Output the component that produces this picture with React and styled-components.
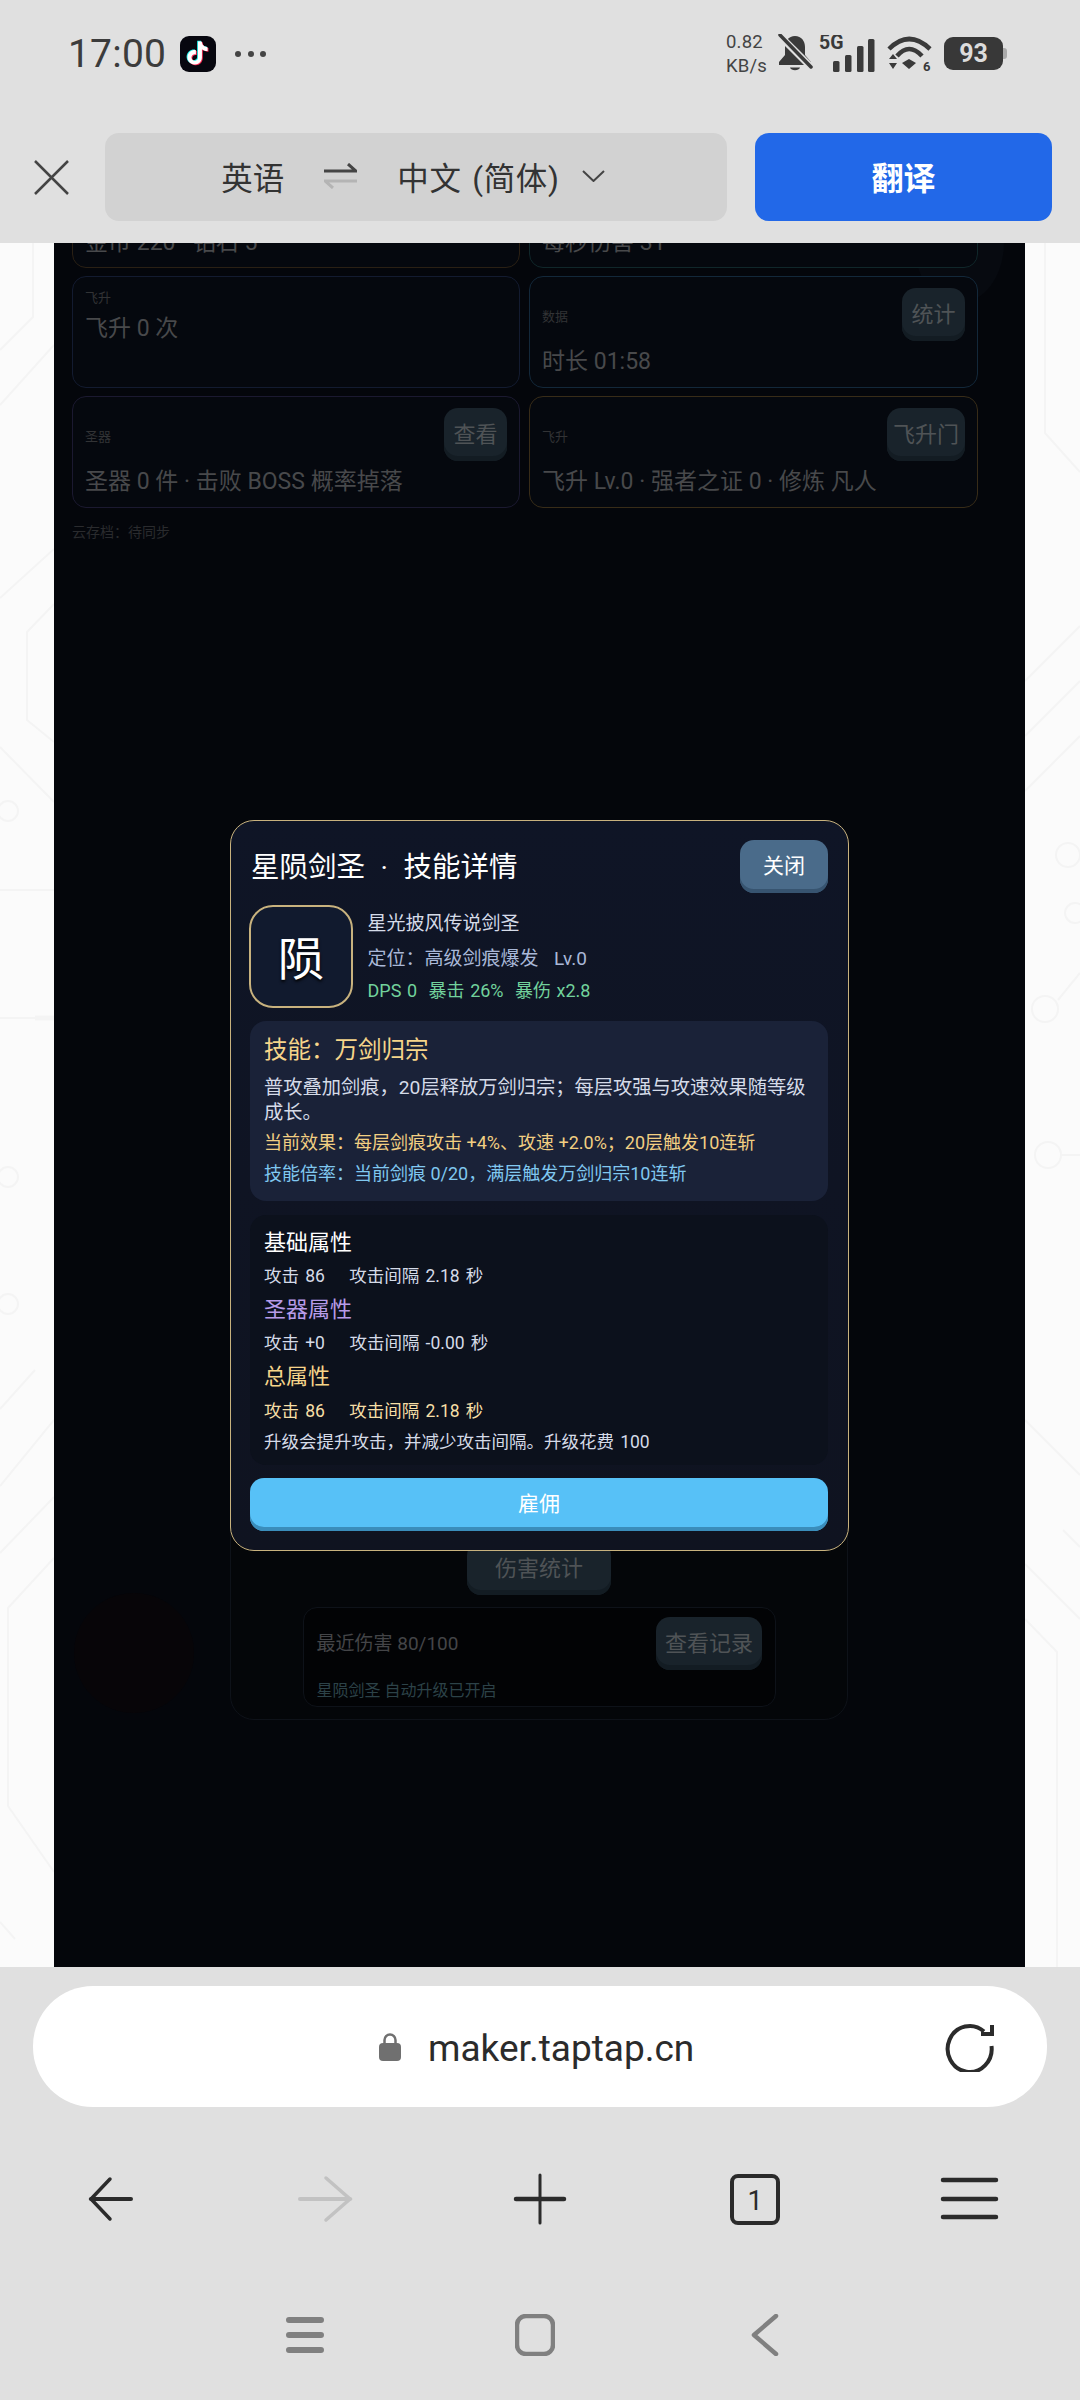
import React from "react";
import styled, { createGlobalStyle } from "styled-components";

const Global = createGlobalStyle`
  html, body { margin: 0; padding: 0; background: #e0e0e0; }
  * { box-sizing: border-box; }
  body { font-family: Roboto, "Noto Sans CJK SC", sans-serif; }
`;

const Screen = styled.div`
  width: 1080px; height: 2400px; display: flex; flex-direction: column;
  overflow: hidden; background: #e0e0e0;
`;
const TopChrome = styled.header`
  flex: none; height: 243px; background: #e0e0e0; display: flex; flex-direction: column;
`;
const StatusBar = styled.div`
  height: 107px; display: flex; align-items: center; justify-content: space-between;
  padding: 0 77px 0 68px; color: #3c3c3c;
`;
const StatusGroup = styled.div`
  display: flex; align-items: center; gap: ${p => p.$gap || 0}px;
`;
const Clock = styled.span`
  font-size: 39px; line-height: 40px; letter-spacing: 0.2px; width: 112px;
`;
const AppBadge = styled.span`
  width: 36px; height: 36px; border-radius: 9px; background: #07070f;
  display: flex; align-items: center; justify-content: center;
`;
const MoreDots = styled.span`
  display: flex; gap: 6.5px; margin-left: 19px;
  i { width: 6px; height: 6px; border-radius: 50%; background: #444; display: block; }
`;
const NetSpeed = styled.span`
  display: flex; flex-direction: column; font-size: 18.5px; line-height: 24px; width: 40px;
  letter-spacing: 0.2px; color: #444;
`;
const SignalSlot = styled.span`
  display: flex; margin-left: -6px;
`;
const Battery = styled.span`
  width: 59px; height: 33px; border-radius: 9px; background: #383838; color: #dcdcdc;
  font-size: 25px; font-weight: 700; display: flex; align-items: center; justify-content: center;
  position: relative;
  &::after {
    content: ""; position: absolute; left: 59px; top: 11px; width: 4px; height: 11px;
    border-radius: 0 3px 3px 0; background: #aaa;
  }
`;
const TranslateRow = styled.div`
  display: flex; align-items: center; padding: 26px 28px 0 34px;
`;
const CloseGlyph = styled.svg`
  width: 35px; height: 35px; margin-right: 36px; flex: none;
`;
const LangPill = styled.div`
  width: 622px; height: 88px; border-radius: 14px; background: #d2d2d2; color: #333;
  display: flex; align-items: center; justify-content: center; padding: 0 6px 2px 0;
  font-size: 31.5px; margin-right: 28px; font-weight: 400;
`;
const TargetLang = styled.span`
  letter-spacing: 0.7px; word-spacing: 2px; white-space: nowrap;
`;
const SwapIcon = styled.svg`
  width: 33px; height: 26px; margin: 0 40px;
`;
const Chevron = styled.svg`
  width: 23px; height: 12px; margin-left: 22px;
`;
const TranslateButton = styled.div`
  width: 297px; height: 88px; border-radius: 14px; background: #2268e8; color: #fff;
  font-size: 32px; font-weight: 700; display: flex; align-items: center; justify-content: center;
  padding-bottom: 2px;
`;

const Main = styled.main`
  flex: 1; min-height: 0; display: grid; grid-template-columns: 54px 971px 55px; background: #fbfbfb;
  overflow: hidden;
`;
const Gutter = styled.svg`
  display: block; width: 100%; height: 100%;
  fill: none; stroke: #f4f4f4; stroke-width: 2;
`;
const Panel = styled.div`
  position: relative; background: #04060b; overflow: hidden; padding: 0 18px;
`;
const GlowBlob = styled.div`
  position: absolute; left: 20px; top: 1350px; width: 120px; height: 120px; border-radius: 50%;
  background: #070508;
`;
const CornerGlow = styled.div`
  position: absolute; left: 860px; top: -60px; width: 90px; height: 120px; border-radius: 50%;
  background: #070a10;
`;
const CardGrid = styled.div`
  position: relative; margin-top: -87px; width: 906px; display: grid;
  grid-template-columns: 448px 449px; gap: 8px 9px; grid-auto-rows: 112px;
`;
const Card = styled.div`
  border: 1px solid ${p => p.$edge}; border-radius: 14px; padding: 11px 12px 0 12px;
  display: grid; grid-template-columns: 1fr auto; position: relative; background: #05080e;
  align-content: start;
`;
const CardLabel = styled.div`
  font-size: 13px; line-height: 20px; color: #323335; grid-column: 1; align-self: ${p => p.$mid ? "center" : "start"};
  margin-top: ${p => p.$mid ? 4 : 0}px;
`;
const CardText = styled.div`
  font-size: 23px; line-height: 30px; color: #48494b; grid-column: 1 / 3; margin-top: ${p => p.$top || 0}px;
  white-space: nowrap;
`;
const DimButton = styled.div`
  height: 53px; padding: 0 ${p => p.$pad ?? 9.5}px 5px; border-radius: 14px; background: #19232b;
  box-shadow: inset 0 -5px 0 #131c23; color: #4f5356; font-size: ${p => p.$size || 22}px;
  display: flex; align-items: center; justify-content: center; white-space: nowrap;
`;
const SyncNote = styled.div`
  position: relative; font-size: 14px; line-height: 20px; color: #2a2b2e; margin-top: 14px;
`;
const DamageCard = styled.section`
  position: relative; margin: 855px 0 0 158px; width: 618px; height: 323px;
  border: 1px solid #0e1219; border-radius: 24px; background: #040609;
  display: flex; flex-direction: column; align-items: center; justify-content: flex-end;
  padding-bottom: 12px; gap: 12px;
`;
const RecordCard = styled.div`
  width: 473px; height: 100px; border: 1px solid #0e1219; border-radius: 14px; background: #020305;
  display: grid; grid-template-columns: 1fr auto; padding: 9px 13px 0 13px;
`;
const RecordText = styled.div`
  font-size: 19px; line-height: 24px; color: #444548; margin-top: 15px;
`;
const RecordNote = styled.div`
  grid-column: 1 / 3; font-size: 16px; line-height: 24px; color: #2c4248; margin-top: 6px;
`;

const Overlay = styled.div`
  position: absolute; inset: 0; display: flex; justify-content: center; align-items: flex-start;
  padding-top: 577px;
`;
const Modal = styled.div`
  width: 619px; height: 731px; border: 1.5px solid #c8b27e; border-radius: 24px;
  background: linear-gradient(180deg, #0f1526 0%, #0f1320 100%); padding: 19px 20px 0 19px;
  display: flex; flex-direction: column;
`;
const ModalHead = styled.div`
  display: flex; align-items: flex-start; justify-content: space-between; height: 53px;
`;
const ModalTitle = styled.h2`
  margin: 0; font-weight: 400; font-size: 28.5px; line-height: 55px; color: #fff; padding-left: 1px;
  white-space: pre; word-spacing: 8.5px;
`;
const RaisedButton = styled.button`
  border: 0; font-family: inherit; color: #fff; font-size: 21px;
  background: ${p => p.$bg}; box-shadow: inset 0 -4px 0 ${p => p.$edge};
  height: 53px; width: ${p => p.$wide ? "100%" : "88px"}; border-radius: 14px; padding: 0 0 6px;
  margin-top: ${p => p.$top || 0}px; display: block; flex: none;
`;
const HeroRow = styled.div`
  display: flex; gap: 14.5px; margin: 12px 0 0 -1px;
`;
const Avatar = styled.div`
  width: 104px; height: 103px; border: 2.5px solid #c8b27e; border-radius: 24px; background: #111a2e;
  color: #fff; font-size: 46px; display: flex; align-items: center; justify-content: center;
  text-shadow: 0 2px 3px #000; flex: none; padding-bottom: 4px;
`;
const HeroInfo = styled.div`
  display: flex; flex-direction: column; padding-top: 1px;
`;
const HeroLine = styled.div`
  font-size: ${p => p.$size}px; line-height: ${p => p.$lh}px; color: ${p => p.$color}; white-space: pre;
  word-spacing: ${p => p.$spread || 0}px;
`;
const SkillBox = styled.div`
  margin-top: 13px; height: 180px; background: #1a2238; border-radius: 16px; padding: 11px 14px 0;
`;
const SkillTitle = styled.div`
  font-size: 23.5px; line-height: 36px; color: #f6d58a;
`;
const SkillDesc = styled.div`
  font-size: 19.25px; line-height: 25px; color: #d5dbe8; margin-top: 7px;
`;
const SkillLine = styled.div`
  font-size: 18px; line-height: 26px; margin-top: 5px; color: ${p => p.$color}; white-space: nowrap;
`;
const AttrBox = styled.div`
  margin-top: 14px; height: 250px; background: #0c111c; border-radius: 16px; padding: 12px 14px 0;
`;
const AttrHead = styled.div`
  font-size: 22px; line-height: 32px; color: ${p => p.$color}; margin-top: ${p => p.$top || 0}px;
`;
const AttrLine = styled.div`
  font-size: 17.5px; line-height: 26px; color: ${p => p.$color || "#d5dbe8"}; margin-top: ${p => p.$top || 4}px;
  white-space: pre; word-spacing: 1.8px;
`;

const BottomChrome = styled.footer`
  flex: none; height: 433px; background: #e0e0e0; padding-top: 19px;
`;
const UrlPill = styled.div`
  margin: 0 33px; height: 121px; border-radius: 60px; background: #fff;
  display: grid; grid-template-columns: 346px 1fr 102px; align-items: center;
`;
const UrlHost = styled.div`
  grid-column: 2; display: flex; align-items: center; gap: 27px; color: #2b2b2b; font-size: 37px;
  font-family: Roboto, sans-serif;
`;
const UrlText = styled.span`
  padding-top: 3px;
`;
const NavRow = styled.nav`
  height: 100px; margin-top: 42px; display: grid; grid-template-columns: repeat(5, 215px);
  padding-left: 2.5px; justify-items: center; align-items: center;
`;
const SysRow = styled.div`
  height: 100px; margin-top: 36px; display: grid; grid-template-columns: repeat(3, 230px);
  padding-left: 190px; justify-items: center; align-items: center;
`;

const TIKTOK = "M12.525.02c1.31-.02 2.61-.01 3.91-.02.08 1.53.63 3.09 1.75 4.17 1.12 1.11 2.7 1.62 4.24 1.79v4.03c-1.44-.05-2.89-.35-4.2-.97-.57-.26-1.1-.59-1.62-.93-.01 2.92.01 5.84-.02 8.75-.08 1.4-.54 2.79-1.35 3.94-1.31 1.92-3.58 3.17-5.91 3.21-1.43.08-2.86-.31-4.08-1.03-2.02-1.19-3.44-3.37-3.65-5.71-.02-.5-.03-1-.01-1.49.18-1.9 1.12-3.72 2.58-4.96 1.66-1.44 3.98-2.13 6.15-1.72.02 1.48-.04 2.96-.04 4.44-.99-.32-2.15-.23-3.02.37-.63.41-1.11 1.04-1.36 1.75-.21.51-.15 1.07-.14 1.61.24 1.64 1.82 3.02 3.5 2.87 1.12-.01 2.19-.66 2.77-1.61.19-.33.4-.67.41-1.06.1-1.79.06-3.57.07-5.36.01-4.03-.01-8.05.02-12.07z";

const TikTokIcon = () => (
  <svg width="26" height="27" viewBox="-1 -1 27 27">
    <path d={TIKTOK} fill="#25f4ee" transform="translate(-.9 -.7)" />
    <path d={TIKTOK} fill="#fe2c55" transform="translate(.9 .7)" />
    <path d={TIKTOK} fill="#fff" />
  </svg>
);
const BellOffIcon = () => (
  <svg width="35" height="39" viewBox="0 0 35 39">
    <path d="M17 2c-6.5 0-10 5-10 11v8l-6 7v3h32v-3l-6-7v-8C27 7 23.500 2 17 2z" fill="#3a3a3a" />
    <path d="M12 33.500h10c-1 3.500-9 3.500-10 0z" fill="#3a3a3a" />
    <path d="M1 1l33 33" stroke="#e0e0e0" strokeWidth="7" />
    <path d="M2 1l31 32" stroke="#3a3a3a" strokeWidth="3.500" strokeLinecap="round" />
  </svg>
);
const SignalIcon = () => (
  <svg width="56" height="38" viewBox="0 0 56 38">
    <text x="0" y="14" fontSize="19.5" fontWeight="700" fontFamily="Roboto, sans-serif" fill="#3a3a3a">5G</text>
    {[[14, 26], [26, 20], [38, 11], [49, 4]].map(([x, y]) => (
      <rect key={x} x={x} y={y} width="6.500" height={37 - y} rx="1.500" fill="#3a3a3a" />
    ))}
  </svg>
);
const WifiIcon = () => (
  <svg width="45" height="36" viewBox="0 0 45 36">
    <path d="M2 13Q22-7 43 13" fill="none" stroke="#3a3a3a" strokeWidth="4.500" />
    <path d="M10 20Q22 6 35 20" fill="none" stroke="#3a3a3a" strokeWidth="4.500" />
    <path d="M15 27l7-4 7 4-7 6zM2 23l4-5 4 5zM2 27h8l-4 6z" fill="#3a3a3a" />
    <text x="36" y="35" fontSize="13" fontWeight="700" fontFamily="Roboto, sans-serif" fill="#3a3a3a">6</text>
  </svg>
);

const LeftPattern = () => (
  <Gutter viewBox="0 243 54 1724" preserveAspectRatio="none">
    <path d="M33 243V317L0 350M0 405L54 345M0 598L54 549M54 604L27 632V720L54 742M0 747L54 802M0 890H54M0 1018H54" />
    <path d="M35 1018H54" strokeWidth="5" />
    <circle cx="8" cy="811" r="10" />
    <circle cx="8" cy="1177" r="10" />
    <circle cx="8" cy="1304" r="10" />
    <path d="M0 1409L35 1370M0 1486L54 1420M0 1553L54 1497M54 1558L8 1608V1806L54 1872M0 1922L15 1939" />
  </Gutter>
);
const RightPattern = () => (
  <Gutter viewBox="1025 243 55 1724" preserveAspectRatio="none">
    <path d="M1045 243V433L1080 472M1025 681L1080 626M1025 736L1080 681M1025 791L1080 736" />
    <circle cx="1068" cy="855" r="12" />
    <circle cx="1075" cy="913" r="10" />
    <circle cx="1045" cy="1009" r="13" />
    <path d="M1058 1000L1080 973" />
    <circle cx="1048" cy="1155" r="13" />
    <path d="M1061 1155H1080M1025 1420L1080 1475M1063 1530L1080 1547M1025 1564L1080 1619M1025 1619L1057 1652V1970" />
  </Gutter>
);

export default function App() {
  return (
    <Screen>
      <Global />
      <TopChrome>
        <StatusBar>
          <StatusGroup>
            <Clock>17:00</Clock>
            <AppBadge><TikTokIcon /></AppBadge>
            <MoreDots><i /><i /><i /></MoreDots>
          </StatusGroup>
          <StatusGroup $gap={12}>
            <NetSpeed><span>0.82</span><span>KB/s</span></NetSpeed>
            <BellOffIcon />
            <SignalSlot><SignalIcon /></SignalSlot>
            <WifiIcon />
            <Battery>93</Battery>
          </StatusGroup>
        </StatusBar>
        <TranslateRow>
          <CloseGlyph viewBox="0 0 35 35">
            <path d="M1 1L34 34M34 1L1 34" stroke="#444" strokeWidth="2.500" fill="none" />
          </CloseGlyph>
          <LangPill>
            <span>英语</span>
            <SwapIcon viewBox="0 0 33 26">
              <path d="M0 8H32L24 1" stroke="#444" strokeWidth="3" fill="none" />
              <path d="M33 18H1L9 25" stroke="#b4b4b4" strokeWidth="3" fill="none" />
            </SwapIcon>
            <TargetLang>中文 (简体)</TargetLang>
            <Chevron viewBox="0 0 23 12">
              <path d="M1 1L11.500 11L22 1" stroke="#444" strokeWidth="2" fill="none" />
            </Chevron>
          </LangPill>
          <TranslateButton>翻译</TranslateButton>
        </TranslateRow>
      </TopChrome>

      <Main>
        <LeftPattern />
        <Panel>
          <CornerGlow />
          <GlowBlob />
          <CardGrid>
            <Card $edge="#2a2014">
              <CardText $top={60}>金币 220 · 钻石 5</CardText>
            </Card>
            <Card $edge="#10272a">
              <CardText $top={60}>每秒伤害 31</CardText>
            </Card>
            <Card $edge="#131b30">
              <CardLabel>飞升</CardLabel>
              <CardText $top={6}>飞升 0 次</CardText>
            </Card>
            <Card $edge="#13283a">
              <CardLabel $mid>数据</CardLabel>
              <DimButton>统计</DimButton>
              <CardText $top={6}>时长 01:58</CardText>
            </Card>
            <Card $edge="#1b1930">
              <CardLabel $mid>圣器</CardLabel>
              <DimButton>查看</DimButton>
              <CardText $top={6}>圣器 0 件 · 击败 BOSS 概率掉落</CardText>
            </Card>
            <Card $edge="#382c18">
              <CardLabel $mid>飞升</CardLabel>
              <DimButton $pad={6}>飞升门</DimButton>
              <CardText $top={6}>飞升 Lv.0 · 强者之证 0 · 修炼 凡人</CardText>
            </Card>
          </CardGrid>
          <SyncNote>云存档：待同步</SyncNote>
          <DamageCard>
            <DimButton $pad={28}>伤害统计</DimButton>
            <RecordCard>
              <RecordText>最近伤害 80/100</RecordText>
              <DimButton $pad={8.5}>查看记录</DimButton>
              <RecordNote>星陨剑圣 自动升级已开启</RecordNote>
            </RecordCard>
          </DamageCard>
          <Overlay>
            <Modal>
              <ModalHead>
                <ModalTitle>星陨剑圣 · 技能详情</ModalTitle>
                <RaisedButton $bg="#4a6b8a" $edge="#375470">关闭</RaisedButton>
              </ModalHead>
              <HeroRow>
                <Avatar>陨</Avatar>
                <HeroInfo>
                  <HeroLine $size={19} $lh={36} $color="#d5dbe8">星光披风传说剑圣</HeroLine>
                  <HeroLine $size={19} $lh={34} $spread={3} $color="#a9b8d8">定位：高级剑痕爆发  Lv.0</HeroLine>
                  <HeroLine $size={18} $lh={30} $spread={1.2} $color="#72d29c">DPS 0  暴击 26%  暴伤 x2.8</HeroLine>
                </HeroInfo>
              </HeroRow>
              <SkillBox>
                <SkillTitle>技能：万剑归宗</SkillTitle>
                <SkillDesc>普攻叠加剑痕，20层释放万剑归宗；每层攻强与攻速效果随等级成长。</SkillDesc>
                <SkillLine $color="#f2cf82">当前效果：每层剑痕攻击 +4%、攻速 +2.0%；20层触发10连斩</SkillLine>
                <SkillLine $color="#80c8f0">技能倍率：当前剑痕 0/20，满层触发万剑归宗10连斩</SkillLine>
              </SkillBox>
              <AttrBox>
                <AttrHead $color="#ffffff">基础属性</AttrHead>
                <AttrLine>攻击 86    攻击间隔 2.18 秒</AttrLine>
                <AttrHead $color="#b79ce8" $top={5}>圣器属性</AttrHead>
                <AttrLine>攻击 +0    攻击间隔 -0.00 秒</AttrLine>
                <AttrHead $color="#f6d58a" $top={5}>总属性</AttrHead>
                <AttrLine $color="#f6dfa6" $top={5}>攻击 86    攻击间隔 2.18 秒</AttrLine>
                <AttrLine $top={5}>升级会提升攻击，并减少攻击间隔。升级花费 100</AttrLine>
              </AttrBox>
              <RaisedButton $wide $top={13} $bg="#57c1f7" $edge="#3a8dbb">雇佣</RaisedButton>
            </Modal>
          </Overlay>
        </Panel>
        <RightPattern />
      </Main>

      <BottomChrome>
        <UrlPill>
          <UrlHost>
            <svg width="22" height="28" viewBox="0 0 22 28">
              <path d="M5.500 11V7a5.500 5.500 0 0 1 11 0v4" fill="none" stroke="#707070" strokeWidth="2.500" />
              <rect x="0" y="10" width="22" height="18" rx="4" fill="#707070" />
            </svg>
            <UrlText>maker.taptap.cn</UrlText>
          </UrlHost>
          <svg width="50" height="50" viewBox="0 0 50 50" fill="none" stroke="#2b2b2b" strokeWidth="4">
            <path d="M46.500 24A22 23 0 1 1 39 9.500" />
            <path d="M47 3V12H36" />
          </svg>
        </UrlPill>
        <NavRow>
          <svg width="60" height="60" viewBox="0 0 60 60" fill="none" stroke="#2b2b2b" strokeWidth="4" strokeLinecap="round">
            <path d="M30 10L11 30L30 50" strokeWidth="3.500" /><path d="M11 30H51" />
          </svg>
          <svg width="60" height="60" viewBox="0 0 60 60" fill="none" stroke="#c2c2c2" strokeWidth="4" strokeLinecap="round">
            <path d="M31 9L55 30L31 51" strokeWidth="3.500" /><path d="M5 30H55" />
          </svg>
          <svg width="60" height="60" viewBox="0 0 60 60" fill="none" stroke="#2b2b2b" strokeLinecap="round">
            <path d="M6 30H54" strokeWidth="4.500" /><path d="M30 6V54" strokeWidth="3" />
          </svg>
          <svg width="60" height="60" viewBox="0 0 60 60" fill="none" stroke="#2b2b2b">
            <rect x="7" y="7" width="46" height="47" rx="6" strokeWidth="4" />
            <text x="30" y="41" textAnchor="middle" fontSize="27" fontFamily="Roboto, sans-serif" fill="#2b2b2b" stroke="none">1</text>
          </svg>
          <svg width="60" height="60" viewBox="0 0 60 60" fill="none" stroke="#2b2b2b" strokeWidth="4.500" strokeLinecap="round">
            <path d="M3 11H56M3 30H56M3 48H56" />
          </svg>
        </NavRow>
        <SysRow>
          <svg width="40" height="40" viewBox="0 0 40 40" fill="none" stroke="#808080" strokeWidth="6" strokeLinecap="round">
            <path d="M4 5H36M4 20H36M4 35H36" />
          </svg>
          <svg width="40" height="42" viewBox="0 0 40 42" fill="none" stroke="#808080" strokeWidth="4.500">
            <rect x="2" y="2" width="36" height="38" rx="9" />
          </svg>
          <svg width="40" height="42" viewBox="0 0 40 42" fill="none" stroke="#808080" strokeWidth="4.500" strokeLinecap="round">
            <path d="M31 2L9 21L31 40" strokeLinejoin="round" />
          </svg>
        </SysRow>
      </BottomChrome>
    </Screen>
  );
}
